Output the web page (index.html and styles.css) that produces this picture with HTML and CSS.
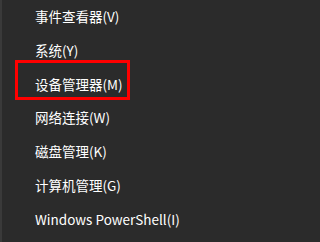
FILE: index.html
```html
<!DOCTYPE html>
<html lang="zh-CN">
<head>
<meta charset="utf-8">
<title>菜单</title>
<link rel="stylesheet" href="styles.css">
</head>
<body>
<div class="menu">
  <ul class="menu-list">
    <li class="menu-item">事件查看器(V)</li>
    <li class="menu-item">系统(Y)</li>
    <li class="menu-item marked">设备管理器(M)</li>
    <li class="menu-item">网络连接(W)</li>
    <li class="menu-item">磁盘管理(K)</li>
    <li class="menu-item">计算机管理(G)</li>
    <li class="menu-item">Windows PowerShell(I)</li>
  </ul>
</div>
</body>
</html>
```
FILE: styles.css
```css
html, body {
  margin: 0;
  padding: 0;
  background: #2b2b2b;
}
.menu {
  width: 308px;
  height: 242px;
  box-sizing: border-box;
  border-left: 2px solid #3a3a3a;
  background: #2b2b2b;
  overflow: hidden;
}
.menu-list {
  list-style: none;
  margin: 0;
  padding: 0 0 0 33px;
}
.menu-item {
  position: relative;
  height: 33.75px;
  line-height: 33.75px;
  font-family: "Noto Sans CJK SC", "Noto Sans", sans-serif;
  font-size: 13.5px;
  color: #ffffff;
  white-space: nowrap;
}
.marked::before {
  content: "";
  position: absolute;
  left: -20px;
  top: -7.5px;
  width: 115px;
  height: 40px;
  box-sizing: border-box;
  border: 3px solid #ff0000;
}
```
